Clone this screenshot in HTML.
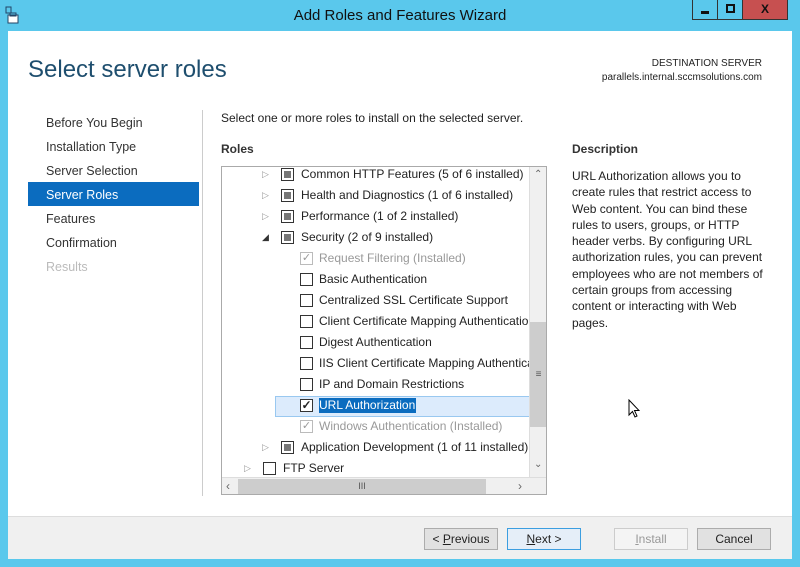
<html><head><style>
*{margin:0;padding:0;box-sizing:border-box}
body{width:800px;height:567px;background:#5ac8ec;font-family:"Liberation Sans",sans-serif;position:relative;overflow:hidden;font-size:12px;color:#222}
.a{position:absolute}
.win{left:8px;top:31px;width:784px;height:528px;background:#fff}
.nav{left:46px;font-size:12.5px;color:#333}
.row{position:absolute;height:21px;line-height:21px;font-size:12px;white-space:nowrap;color:#222}
.cb{position:absolute;width:13px;height:13px;border:1px solid #333;background:#fff;top:4px}
.cb.part:after{content:"";position:absolute;left:2px;top:2px;width:7px;height:7px;background:#777}
.tri{position:absolute;top:0;color:#999;font-size:9px}
.btn{position:absolute;top:528px;width:74px;height:22px;border:1px solid #acacac;background:#e1e1e1;text-align:center;line-height:20px;font-size:12px}
</style></head><body>
<div class="a" style="left:0;top:0;width:800px;height:31px;background:#5ac8ec"></div>
<svg class="a" style="left:5px;top:6px" width="14" height="18"><rect x="1" y="1" width="5" height="6" fill="none" stroke="#246"/><rect x="3" y="9" width="10" height="8" fill="#fff" stroke="#246"/><rect x="5" y="7" width="6" height="3" fill="none" stroke="#246"/></svg>
<div class="a" style="left:0;width:800px;top:7px;text-align:center;font-size:15px;color:#111">Add Roles and Features Wizard</div>
<div class="a" style="left:692px;top:0;width:26px;height:20px;border:1px solid #333;border-top:none"><div class="a" style="left:8px;top:11px;width:8px;height:3px;background:#111"></div></div>
<div class="a" style="left:717px;top:0;width:26px;height:20px;border:1px solid #333;border-top:none"><div class="a" style="left:8px;top:4px;width:9px;height:9px;border:2px solid #111"></div></div>
<div class="a" style="left:742px;top:0;width:46px;height:20px;background:#c75050;border:1px solid #333;border-top:none;color:#111;font-weight:bold;text-align:center;line-height:18px;font-size:12px">X</div>
<div class="a win"></div>
<div class="a" style="left:28px;top:56px;font-size:24px;color:#1e4e6e;font-weight:300">Select server roles</div>
<div class="a" style="right:38px;top:57px;font-size:10px;color:#222;text-align:right;line-height:14px">DESTINATION SERVER<br>parallels.internal.sccmsolutions.com</div>
<div class="a nav" style="top:116px">Before You Begin</div>
<div class="a nav" style="top:140px">Installation Type</div>
<div class="a nav" style="top:164px">Server Selection</div>
<div class="a" style="left:28px;top:182px;width:171px;height:24px;background:#0b6cbf"></div>
<div class="a nav" style="top:188px;color:#fff">Server Roles</div>
<div class="a nav" style="top:212px">Features</div>
<div class="a nav" style="top:236px">Confirmation</div>
<div class="a nav" style="top:260px;color:#bbb">Results</div>
<div class="a" style="left:202px;top:110px;width:1px;height:386px;background:#ccc"></div>
<div class="a" style="left:221px;top:111px">Select one or more roles to install on the selected server.</div>
<div class="a" style="left:221px;top:142px;font-weight:bold;color:#333">Roles</div>
<div class="a" style="left:572px;top:142px;font-weight:bold;color:#333">Description</div>
<div class="a" style="left:572px;top:168px;width:200px;line-height:16.3px;color:#222">URL Authorization allows you to create rules that restrict access to Web content. You can bind these rules to users, groups, or HTTP header verbs. By configuring URL authorization rules, you can prevent employees who are not members of certain groups from accessing content or interacting with Web pages.</div>
<div class="a" style="left:221px;top:166px;width:326px;height:329px;border:1px solid #aaa;overflow:hidden;background:#fff">
<div class="a" style="left:53px;top:229px;width:255px;height:21px;background:#dcebfc;border:1px solid #99c8f0"></div>
<div class="row" style="top:-3px;left:40px"><span class="tri">&#9655;</span><span class="cb part" style="left:19px"></span><span style="position:absolute;left:39px">Common HTTP Features (5 of 6 installed)</span></div>
<div class="row" style="top:18px;left:40px"><span class="tri">&#9655;</span><span class="cb part" style="left:19px"></span><span style="position:absolute;left:39px">Health and Diagnostics (1 of 6 installed)</span></div>
<div class="row" style="top:39px;left:40px"><span class="tri">&#9655;</span><span class="cb part" style="left:19px"></span><span style="position:absolute;left:39px">Performance (1 of 2 installed)</span></div>
<div class="row" style="top:60px;left:40px"><span class="tri" style="color:#333">&#9698;</span><span class="cb part" style="left:19px"></span><span style="position:absolute;left:39px">Security (2 of 9 installed)</span></div>
<div class="row" style="top:81px;left:78px;color:#999"><span class="cb" style="border-color:#bbb;color:#999;font-size:11px;line-height:11px;text-align:center">&#10003;</span><span style="position:absolute;left:19px">Request Filtering (Installed)</span></div>
<div class="row" style="top:102px;left:78px"><span class="cb"></span><span style="position:absolute;left:19px">Basic Authentication</span></div>
<div class="row" style="top:123px;left:78px"><span class="cb"></span><span style="position:absolute;left:19px">Centralized SSL Certificate Support</span></div>
<div class="row" style="top:144px;left:78px"><span class="cb"></span><span style="position:absolute;left:19px">Client Certificate Mapping Authentication</span></div>
<div class="row" style="top:165px;left:78px"><span class="cb"></span><span style="position:absolute;left:19px">Digest Authentication</span></div>
<div class="row" style="top:186px;left:78px"><span class="cb"></span><span style="position:absolute;left:19px">IIS Client Certificate Mapping Authentication</span></div>
<div class="row" style="top:207px;left:78px"><span class="cb"></span><span style="position:absolute;left:19px">IP and Domain Restrictions</span></div>
<div class="row" style="top:228px;left:78px"><span class="cb" style="font-size:12px;line-height:11px;text-align:center;font-weight:bold">&#10003;</span><span style="position:absolute;left:19px;top:3px;line-height:15px;background:#0b6cbf;color:#fff;padding-right:1px">URL Authorization</span></div>
<div class="row" style="top:249px;left:78px;color:#999"><span class="cb" style="border-color:#bbb;font-size:11px;line-height:11px;text-align:center">&#10003;</span><span style="position:absolute;left:19px">Windows Authentication (Installed)</span></div>
<div class="row" style="top:270px;left:40px"><span class="tri">&#9655;</span><span class="cb part" style="left:19px"></span><span style="position:absolute;left:39px">Application Development (1 of 11 installed)</span></div>
<div class="row" style="top:291px;left:22px"><span class="tri">&#9655;</span><span class="cb" style="left:19px"></span><span style="position:absolute;left:39px">FTP Server</span></div>
<div class="a" style="left:307px;top:0;width:18px;height:310px;background:#f0f0f0;border-left:1px solid #ddd"><div class="a" style="left:0;top:155px;width:17px;height:105px;background:#cdcdcd;text-align:center;line-height:105px;color:#555;font-size:10px">&#8801;</div><div class="a" style="left:4px;top:2px;color:#666;font-size:10px">&#8963;</div><div class="a" style="left:4px;top:292px;color:#666;font-size:10px">&#8964;</div></div>
<div class="a" style="left:0;top:310px;width:325px;height:18px;background:#f0f0f0;border-top:1px solid #ddd"><div class="a" style="left:16px;top:1px;width:248px;height:15px;background:#cdcdcd;text-align:center;line-height:15px;color:#555;font-size:9px">III</div><div class="a" style="left:4px;top:1px;color:#666">&lsaquo;</div><div class="a" style="left:296px;top:1px;color:#666">&rsaquo;</div></div>
</div>
<div class="a" style="left:8px;top:516px;width:784px;height:43px;background:#f0f0f0;border-top:1px solid #ddd"></div>
<div class="btn" style="left:424px">&lt; <u>P</u>revious</div>
<div class="btn" style="left:507px;border-color:#3c9ee0;background:#e5eef8"><u>N</u>ext &gt;</div>
<div class="btn" style="left:614px;background:#f4f4f4;border-color:#ccc;color:#999"><u>I</u>nstall</div>
<div class="btn" style="left:697px">Cancel</div>
<svg class="a" style="left:628px;top:399px" width="12" height="20"><path d="M1 1 L1 16 L4.5 12.5 L7 18 L9 17 L6.5 11.5 L11 11.5 Z" fill="#fff" stroke="#000"/></svg>
</body></html>
